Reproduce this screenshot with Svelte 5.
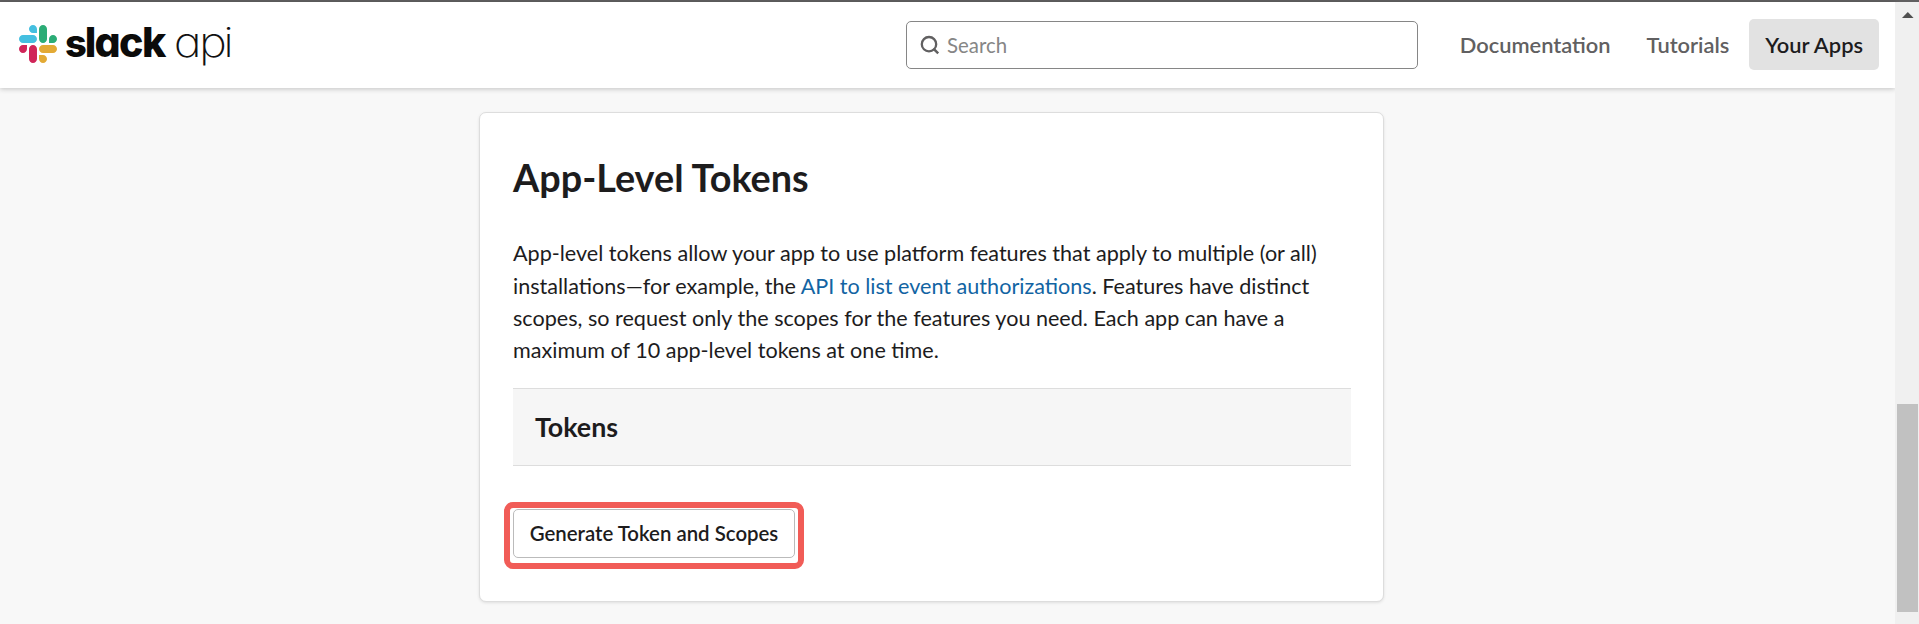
<script>
  const nav = ['Documentation', 'Tutorials'];
</script>

<div class="page">
  <div class="main">
    <header>
      <a class="logo" href="#home" aria-label="slack api">
        <svg width="240" height="60" viewBox="0 0 240 60">
          <g transform="translate(19 9) scale(.3095)">
            <path fill="#d02559" d="M25.8 77.6c0 7.1-5.8 12.9-12.9 12.9S0 84.7 0 77.6s5.8-12.9 12.9-12.9h12.9v12.9zM32.3 77.6c0-7.1 5.8-12.9 12.9-12.9s12.9 5.8 12.9 12.9v32.3c0 7.1-5.8 12.9-12.9 12.9s-12.9-5.8-12.9-12.9V77.6z" />
            <path fill="#44bfe0" d="M45.2 25.8c-7.1 0-12.9-5.8-12.9-12.9S38.1 0 45.2 0s12.9 5.8 12.9 12.9v12.9H45.2zM45.2 32.3c7.1 0 12.9 5.8 12.9 12.9s-5.8 12.9-12.9 12.9H12.9C5.8 58.1 0 52.3 0 45.2s5.8-12.9 12.9-12.9h32.3z" />
            <path fill="#2bac76" d="M97 45.2c0-7.1 5.8-12.9 12.9-12.9s12.9 5.8 12.9 12.9-5.8 12.9-12.9 12.9H97V45.2zM90.5 45.2c0 7.1-5.8 12.9-12.9 12.9s-12.9-5.8-12.9-12.9V12.9C64.7 5.8 70.5 0 77.6 0s12.9 5.8 12.9 12.9v32.3z" />
            <path fill="#e3aa35" d="M77.6 97c7.1 0 12.9 5.8 12.9 12.9s-5.8 12.9-12.9 12.9-12.9-5.8-12.9-12.9V97h12.9zM77.6 90.5c-7.1 0-12.9-5.8-12.9-12.9s5.8-12.9 12.9-12.9h32.3c7.1 0 12.9 5.8 12.9 12.9s-5.8 12.9-12.9 12.9H77.6z" />
          </g>
          <text class="brand" x="65 84.7 94.5 119.1 142.1" y="41.3"><tspan class="initial">s</tspan>lack</text>
          <text class="api" transform="scale(1.15 1)" x="151.2 173 194.2" y="41.3">api</text>
        </svg>
      </a>
      <div class="search">
        <svg width="20" height="20" viewBox="0 0 20 20" fill="none" stroke="#616061" stroke-width="2.3">
          <circle cx="9" cy="9.2" r="7.2" />
          <path d="M13.4 13.6l4.8 4.8" stroke-width="2.5" />
        </svg>
        <span>Search</span>
      </div>
      <nav>
        {#each nav as label}
          <a href="#top">{label}</a>
        {/each}
        <a class="active" href="#apps">Your Apps</a>
      </nav>
    </header>

    <section class="card">
      <h1>App-Level Tokens</h1>
      <p>
        App-level tokens allow your app to use platform features that apply to multiple (or all)<br />
        installations—for example, the <a href="#api">API to list event authorizations</a>. Features have distinct<br />
        scopes, so request only the scopes for the features you need. Each app can have a<br />
        maximum of 10 app-level tokens at one time.
      </p>
      <h2>Tokens</h2>
      <div class="highlight">
        <button>Generate Token and Scopes</button>
      </div>
    </section>
  </div>
  <div class="scrollbar">
    <svg width="12" height="6" viewBox="0 0 12 6"><path d="M0 6L5.8 0 11.6 6z" fill="#505050" /></svg>
    <div class="thumb"></div>
  </div>
</div>

<style>
  :global(body) { margin: 0; overflow: hidden; }
  .page {
    box-sizing: border-box;
    height: 624px;
    display: flex;
    border-top: 2px solid #616061;
    background: #f8f8f8;
    color: #1d1c1d;
    font-family: Lato, "Noto Sans", sans-serif;
  }
  .main { flex: 1; display: flex; flex-direction: column; }
  a { text-decoration: none; color: #1264a3; }
  header {
    height: 86px;
    box-sizing: border-box;
    display: flex;
    align-items: flex-start;
    background: #fff;
    box-shadow: 0 1px 5px rgba(0, 0, 0, .22);
  }
  .logo { flex: none; padding-top: 14px; width: 906px; }
  .logo svg { display: block; }
  .brand {
    font: 800 41px Inter, sans-serif;
    font-feature-settings: "cv11";
    fill: #0b0b0a;
  }
  .initial { font-size: 38px; }
  .api {
    font: 200 41px Inter, sans-serif;
    font-feature-settings: "cv11";
    fill: #111;
  }
  .search {
    flex: none;
    box-sizing: border-box;
    width: 512px;
    height: 48px;
    margin-top: 19px;
    padding-left: 13px;
    display: flex;
    align-items: center;
    gap: 7px;
    border: 1px solid #868686;
    border-radius: 5px;
    color: #868686;
    font-size: 20.4px;
  }
  nav {
    flex: 1;
    display: flex;
    justify-content: flex-end;
    gap: 4px;
    margin: 17px 16px 0 0;
  }
  nav a {
    height: 51px;
    line-height: 52px;
    padding: 0 16px;
    border-radius: 5px;
    color: #616061;
    font-size: 21.85px;
    font-weight: 600;
    white-space: nowrap;
  }
  nav a.active { background: #e2e2e2; color: #1d1c1d; }
  .card {
    box-sizing: border-box;
    width: 905px;
    height: 490px;
    margin: 24px 0 0 479px;
    padding: 0 32px 0 33px;
    border: 1px solid #ddd;
    border-radius: 7px;
    background: #fff;
    box-shadow: 0 1px 3px rgba(0, 0, 0, .1);
  }
  h1 {
    margin: 37px 0 0;
    font-size: 37.8px;
    line-height: 56px;
    font-weight: 700;
  }
  p {
    margin: 31.4px 0 0;
    font-size: 21.58px;
    line-height: 32.2px;
    white-space: nowrap;
  }
  h2 {
    box-sizing: border-box;
    height: 78px;
    margin: 21.8px 0 0;
    padding-left: 22px;
    line-height: 76px;
    border: solid #ddd;
    border-width: 1px 0;
    background: #f6f6f6;
    font-size: 26.8px;
    font-weight: 700;
  }
  .highlight {
    box-sizing: border-box;
    width: 300px;
    height: 67px;
    margin: 36px 0 0 -9px;
    padding: 1px 3px;
    border: 6px solid #f15c57;
    border-radius: 9px;
  }
  button {
    box-sizing: border-box;
    width: 282px;
    height: 49px;
    padding: 0 0 1px;
    border: 1px solid #bbb;
    border-radius: 5px;
    background: #fff;
    color: #1d1c1d;
    font: 600 20.4px Lato, sans-serif;
    white-space: nowrap;
  }
  .scrollbar {
    width: 24px;
    box-sizing: border-box;
    padding: 10px 1px 0 2px;
    background: #f0f0f0;
    display: flex;
    flex-direction: column;
    align-items: center;
  }
  .thumb { align-self: stretch; height: 208px; margin-top: 386px; background: #c1c1c1; }
</style>
